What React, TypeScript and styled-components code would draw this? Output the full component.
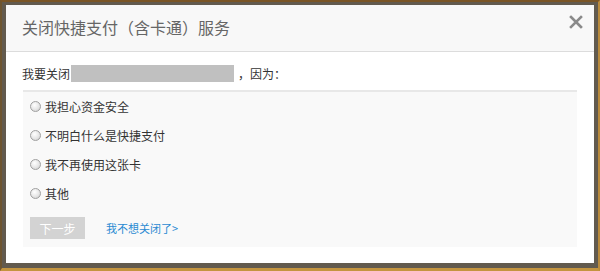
import React from "react";
import styled, { createGlobalStyle } from "styled-components";

const GlobalStyle = createGlobalStyle`
  html, body {
    margin: 0;
    padding: 0;
    background: #5f5a52;
  }
  body {
    font-family: "Noto Sans CJK SC", "Liberation Sans", sans-serif;
  }
`;

const Backdrop = styled.div`
  box-sizing: border-box;
  width: 600px;
  height: 271px;
  background: #625a4e;
  border-top: 2px solid #7a5526;
  border-left: 2px solid #6e5530;
  border-right: 2px solid #b98a3c;
  border-bottom: 3px solid #c4943f;
  padding: 3px 4px 0 4px;
`;

const Dialog = styled.div`
  width: 588px;
  height: 258px;
  background: #fff;
  display: flex;
  flex-direction: column;
`;

const Header = styled.div`
  height: 47px;
  box-sizing: border-box;
  background: #f8f8f8;
  border-bottom: 1px solid #dcdcdc;
  display: flex;
  align-items: center;
  justify-content: space-between;
  padding: 0 10px 2px 16px;
`;

const Title = styled.h2`
  margin: 0;
  font-size: 16px;
  font-weight: normal;
  color: #666;
`;

const CloseButton = styled.button`
  border: 0;
  background: none;
  padding: 0;
  width: 16px;
  height: 16px;
  margin-bottom: 10px;
  cursor: pointer;
  display: flex;
`;

const Body = styled.div`
  padding: 12px 17px 0 16px;
`;

const Intro = styled.div`
  display: flex;
  align-items: center;
  height: 19px;
  font-size: 12px;
  color: #333;
`;

const Masked = styled.span`
  display: inline-block;
  width: 163px;
  height: 17px;
  background: #c0c0c0;
  margin: 0 4px 0 0;
`;

const Panel = styled.div`
  margin-top: 7px;
  margin-left: 1px;
  background: #f9f9f9;
  border-top: 2px solid #e8e8e8;
  padding: 0 7px 8px 7px;
`;

const Option = styled.label`
  display: flex;
  align-items: center;
  height: 29px;
  font-size: 12px;
  color: #333;
  cursor: pointer;
`;

const Radio = styled.span`
  box-sizing: border-box;
  width: 11px;
  height: 11px;
  border-radius: 50%;
  border: 1px solid #a0a0a0;
  background: radial-gradient(circle at 40% 35%, #ffffff 0%, #e6e6e6 55%, #c8c8c8 100%);
  margin-right: 4px;
`;

const Actions = styled.div`
  display: flex;
  align-items: center;
  margin-top: 9px;
`;

const NextButton = styled.button`
  width: 55px;
  height: 22px;
  border: 0;
  background: #d3d3d3;
  color: #fff;
  font-family: inherit;
  font-size: 12px;
  padding: 0;
`;

const Link = styled.a`
  margin-left: 21px;
  font-size: 11px;
  color: #2a8ad2;
  text-decoration: none;
`;

const reasons = ["我担心资金安全", "不明白什么是快捷支付", "我不再使用这张卡", "其他"];

const App = () => {
  const [picked, setPicked] = React.useState(-1);
  return (
    <>
      <GlobalStyle />
      <Backdrop>
        <Dialog>
          <Header>
            <Title>关闭快捷支付（含卡通）服务</Title>
            <CloseButton aria-label="close">
              <svg width="16" height="16" viewBox="0 0 16 16">
                <path d="M3 3 L13 13 M13 3 L3 13" stroke="#8a8a8a" strokeWidth="2.6" strokeLinecap="square" />
              </svg>
            </CloseButton>
          </Header>
          <Body>
            <Intro>
              <span style={{ marginRight: 1 }}>我要关闭</span>
              <Masked />
              <span>，因为：</span>
            </Intro>
            <Panel>
              {reasons.map((r, i) => (
                <Option key={r} onClick={() => setPicked(i)}>
                  <Radio />
                  {r}
                </Option>
              ))}
              <Actions>
                <NextButton disabled={picked < 0}>下一步</NextButton>
                <Link href="#">我不想关闭了&gt;</Link>
              </Actions>
            </Panel>
          </Body>
        </Dialog>
      </Backdrop>
    </>
  );
};

export default App;
